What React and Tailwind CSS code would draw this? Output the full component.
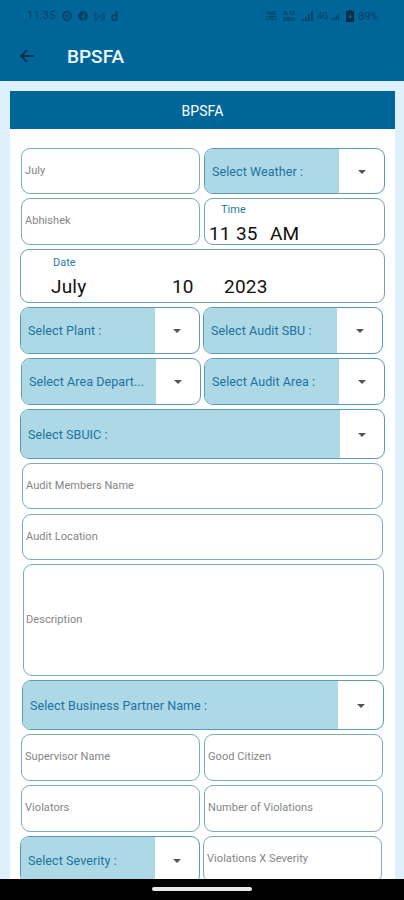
import React from "react";

function Row({ className = "", children }) {
  return <div className={`flex shrink-0 ${className}`}>{children}</div>;
}

function Field({ label, className = "" }) {
  return (
    <div
      className={`flex shrink-0 items-center rounded-[9px] border border-[#7aabbb] bg-white text-[11px] tracking-[0.06px] text-[#858585] ${className}`}
    >
      <span className="whitespace-nowrap">{label}</span>
    </div>
  );
}

function Select({ label, className = "", arrowClass = "w-[44px]" }) {
  return (
    <div
      className={`flex shrink-0 overflow-hidden rounded-[9px] border border-[#5b9bb3] bg-white ${className}`}
    >
      <div className="flex flex-1 items-center bg-[#add8e6] pt-[2px] pl-[7px] text-[12.5px] tracking-[0.08px] text-[#1b739d]">
        <span className="whitespace-nowrap">{label}</span>
      </div>
      <div className={`flex shrink-0 items-center justify-center pt-[1px] ${arrowClass}`}>
        <svg width="8" height="4" viewBox="0 0 8 4">
          <path d="M0 0h8L4 4z" fill="#555" />
        </svg>
      </div>
    </div>
  );
}

function SignalBars({ className }) {
  return (
    <svg className={className} width="11" height="10" viewBox="0 0 11 10" fill="#073f63">
      <path d="M0 8h1.8v2H0zM3 6h1.8v4H3zM6 3.5h1.8V10H6zM9 0.5h1.8V10H9z" />
    </svg>
  );
}

function StatusBar() {
  return (
    <div className="flex h-[32px] items-center pl-[27px] pr-[26px] text-[#073f63]">
      <span className="w-[29px] text-[11px] tracking-[0.2px]">11:35</span>
      {/* Notification icons */}
      <svg className="ml-[6px]" width="10" height="10" viewBox="0 0 10 10">
        <circle cx="5" cy="5" r="4.2" fill="none" stroke="#073f63" strokeWidth="1.5" />
        <path d="M2.5 4h5M2.5 6h5" stroke="#073f63" strokeWidth="1.2" />
      </svg>
      <svg className="ml-[6px]" width="10" height="10" viewBox="0 0 10 10">
        <circle cx="5" cy="5" r="4.8" fill="#073f63" />
        <path d="M5.2 10V4.2q0-1.6 1.7-1.5M3.6 5.6h3" fill="none" stroke="#006699" strokeWidth="1.3" />
      </svg>
      <svg className="ml-[6px]" width="11" height="9" viewBox="0 0 11 9">
        <path d="M1 9V1l4.5 4L10 1v8M3 9V5M8 9V5" fill="none" stroke="#073f63" strokeWidth="0.9" />
      </svg>
      <span className="ml-[6px] text-[13px] font-bold leading-none">d</span>
      {/* Network and battery */}
      <div className="ml-auto flex items-center">
        <span className="w-[13px] text-center text-[5px] font-bold leading-[5px]">VoD<br />LTE2</span>
        <span className="ml-[4px] w-[15px] text-center text-[5.5px] font-bold leading-[6px]">0.18<br />KB/s</span>
        <SignalBars className="ml-[5px]" />
        <span className="ml-[4px] w-[12px] text-[9px] leading-none">4G</span>
        <SignalBars className="ml-[2px] h-[7px] w-[9px]" />
        <svg className="ml-[6px]" width="8" height="12" viewBox="0 0 8 12">
          <path d="M2.5 0h3v1H8v11H0V1h2.5z" fill="#062e49" />
          <path d="M4.5 3L2.5 7h1.3v3l2-4H4.5z" fill="#006699" />
        </svg>
        <span className="ml-[4px] w-[20px] text-[11px] leading-none">89%</span>
      </div>
    </div>
  );
}

export default function App() {
  return (
    <div className="flex h-[900px] w-[404px] flex-col overflow-hidden bg-[#def0fa] font-['Roboto','Liberation_Sans',sans-serif]">
      <header className="h-[81px] shrink-0 bg-[#006699]">
        <StatusBar />
        <div className="flex h-[48px] items-center pl-[19px]">
          <svg width="16" height="14" viewBox="0 0 16 14" fill="none" stroke="#07304b" strokeWidth="1.9">
            <path d="M15 7H2M8 1L2 7l6 6" />
          </svg>
          <h1 className="ml-[32px] pt-[2px] text-[19px] font-medium text-[#eef8ff]">BPSFA</h1>
        </div>
      </header>

      <main className="mt-[10px] ml-[10px] flex h-[788px] w-[385px] flex-col overflow-hidden bg-white">
        <div className="flex h-[38px] shrink-0 items-center justify-center bg-[#006699] pt-[2px] text-[14px] tracking-[0.1px] text-white">
          BPSFA
        </div>

        <form className="flex flex-col pt-[19px]">
          <Row className="pl-[11px]">
            <Field label="July" className="h-[46px] w-[179px] pl-[3px]" />
            <Select label="Select Weather :" className="ml-[4px] h-[46px] w-[181px]" arrowClass="w-[45px]" />
          </Row>

          <Row className="mt-[4px] pl-[11px]">
            <Field label="Abhishek" className="h-[47px] w-[179px] pl-[3px]" />
            {/* Time picker */}
            <div className="ml-[4px] h-[47px] w-[181px] rounded-[9px] border border-[#6fa3b5] pt-[4px] pl-[4px]">
              <div className="pl-[12px] text-[11px] leading-[14px] text-[#2b7ba3]">Time</div>
              <div className="flex pt-[6px] text-[19px] leading-[22px] text-[#111]">
                <span className="w-[27px]">11</span>
                <span className="w-[34px]">35</span>
                <span>AM</span>
              </div>
            </div>
          </Row>

          {/* Date picker */}
          <Row className="mt-[4px] pl-[10px]">
            <div className="h-[54px] w-[365px] rounded-[9px] border border-[#6fa3b5] pt-[6px] pl-[30px]">
              <div className="pl-[2px] text-[11px] leading-[14px] text-[#2b7ba3]">Date</div>
              <div className="flex pt-[6px] text-[19px] leading-[22px] text-[#111]">
                <span className="w-[121px] tracking-[0.2px]">July</span>
                <span className="w-[52px]">10</span>
                <span className="tracking-[0.2px]">2023</span>
              </div>
            </div>
          </Row>

          <Row className="mt-[4px] pl-[10px]">
            <Select label="Select Plant :" className="h-[47px] w-[180px]" />
            <Select label="Select Audit SBU :" className="ml-[3px] h-[47px] w-[180px]" arrowClass="w-[45px]" />
          </Row>

          <Row className="mt-[4px] pl-[11px]">
            <Select label="Select Area Depart..." className="h-[47px] w-[180px]" />
            <Select label="Select Audit Area :" className="ml-[3px] h-[47px] w-[181px]" arrowClass="w-[45px]" />
          </Row>

          <Row className="mt-[4px] pl-[10px]">
            <Select label="Select SBUIC :" className="h-[50px] w-[365px]" />
          </Row>

          <Row className="mt-[4px] pl-[12px]">
            <Field label="Audit Members Name" className="h-[46px] w-[361px] pl-[3px]" />
          </Row>
          <Row className="mt-[5px] pl-[12px]">
            <Field label="Audit Location" className="h-[46px] w-[361px] pl-[3px]" />
          </Row>
          <Row className="mt-[4px] pl-[13px]">
            <Field label="Description" className="h-[112px] w-[361px] pl-[2px]" />
          </Row>

          <Row className="mt-[4px] pl-[12px]">
            <Select label="Select Business Partner Name :" className="h-[50px] w-[362px]" arrowClass="w-[45px]" />
          </Row>

          <Row className="mt-[4px] pl-[11px]">
            <Field label="Supervisor Name" className="h-[47px] w-[179px] pl-[3px]" />
            <Field label="Good Citizen" className="ml-[4px] h-[47px] w-[179px] pl-[3px]" />
          </Row>
          <Row className="mt-[4px] pl-[11px]">
            <Field label="Violators" className="h-[47px] w-[179px] pl-[3px]" />
            <Field label="Number of Violations" className="ml-[4px] h-[47px] w-[179px] pl-[3px]" />
          </Row>
          <Row className="mt-[4px] pl-[10px]">
            <Select label="Select Severity :" className="h-[48px] w-[180px]" />
            <Field label="Violations X Severity" className="ml-[3px] h-[47px] w-[179px] pl-[3px]" />
          </Row>
        </form>
      </main>

      {/* Gesture bar */}
      <footer className="flex h-[21px] shrink-0 justify-center bg-black pt-[8px]">
        <div className="h-[4px] w-[100px] rounded-full bg-[#e8e8e8]" />
      </footer>
    </div>
  );
}
